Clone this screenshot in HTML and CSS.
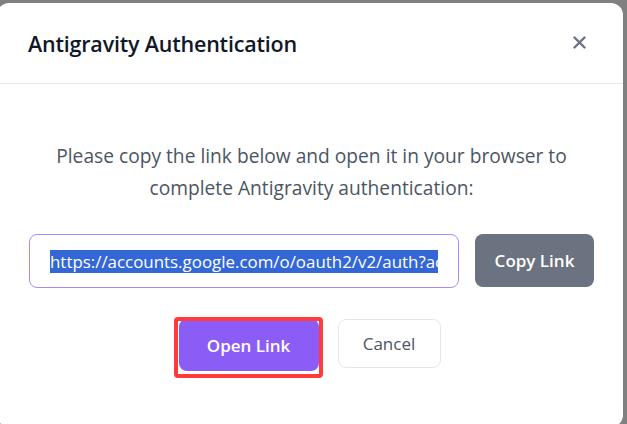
FILE: index.html
```html
<!DOCTYPE html>
<html lang="en">
<head>
<meta charset="utf-8">
<title>Antigravity Authentication</title>
<link rel="stylesheet" href="styles.css">
</head>
<body>
<div class="modal">
  <div class="modal-header">
    <h2 class="modal-title">Antigravity Authentication</h2>
    <button class="close-btn" aria-label="Close">
      <svg width="13" height="13" viewBox="0 0 13 13"><path d="M1.5 1.5 L11.5 11.5 M11.5 1.5 L1.5 11.5" stroke="#6b7280" stroke-width="2.4" stroke-linecap="round" fill="none"/></svg>
    </button>
  </div>
  <div class="modal-body">
    <p class="message">Please copy the link below and open it in your browser to<br>complete Antigravity authentication:</p>
    <div class="link-row">
      <div class="link-field"><div class="link-clip"><span class="link-text">https://accounts.google.com/o/oauth2/v2/auth?access_type=offline&amp;client_id=1071006060591</span></div></div>
      <button class="btn btn-gray">Copy Link</button>
    </div>
    <div class="actions">
      <div class="highlight-wrap">
        <button class="btn btn-primary">Open Link</button>
        <span class="annotation"></span>
      </div>
      <button class="btn btn-outline">Cancel</button>
    </div>
  </div>
</div>
</body>
</html>
```

FILE: styles.css
```css
html, body {
  margin: 0;
  padding: 0;
  height: 100%;
  overflow: hidden;
}
body {
  background: #808080;
  font-family: "Open Sans", "Noto Sans", sans-serif;
}
.modal {
  margin: 3px 0 0 -3px;
  width: 626px;
  height: 424px;
  background: #ffffff;
  border-radius: 12px;
  box-sizing: border-box;
}
.modal-header {
  height: 81px;
  box-sizing: border-box;
  padding: 0 37px 0 31px;
  display: flex;
  align-items: center;
  justify-content: space-between;
  border-bottom: 1px solid #e5e7eb;
}
.modal-title {
  margin: 0;
  font-size: 21.5px;
  font-weight: 600;
  color: #111827;
  letter-spacing: -0.2px;
}
.close-btn {
  border: 0;
  background: none;
  padding: 0;
  width: 13px;
  height: 13px;
  display: flex;
  margin-top: -2px;
}
.modal-body {
  padding: 56px 29px 0 32px;
}
.message {
  margin: 0;
  text-align: center;
  font-size: 19.2px;
  line-height: 32px;
  color: #4b5563;
}
.link-row {
  display: flex;
  gap: 16px;
  margin-top: 30px;
}
.link-field {
  flex: 1;
  min-width: 0;
  height: 54px;
  box-sizing: border-box;
  border: 1px solid #a78bfa;
  border-radius: 8px;
  padding: 0 20px;
  display: flex;
  align-items: center;
}
.link-clip {
  width: 100%;
  overflow: hidden;
  white-space: nowrap;
}
.link-text {
  background: #3367d6;
  color: #ffffff;
  font-size: 16.9px;
  line-height: 23px;
  display: inline-block;
}
.btn {
  font-family: "Open Sans", "Noto Sans", sans-serif;
  font-size: 17px;
  font-weight: 600;
  border-radius: 8px;
  cursor: pointer;
  box-sizing: border-box;
  flex-shrink: 0;
}
.btn-gray {
  width: 119px;
  height: 53px;
  border: 0;
  background: #6b7280;
  color: #ffffff;
}
.actions {
  display: flex;
  justify-content: center;
  align-items: flex-start;
  gap: 19px;
  margin-top: 31px;
  padding-right: 4px;
}
.highlight-wrap {
  position: relative;
  display: flex;
}
.btn-primary {
  width: 140px;
  height: 52px;
  border: 0;
  background: #8b5cf6;
  color: #ffffff;
}
.btn-outline {
  width: 103px;
  height: 49px;
  background: #ffffff;
  border: 1px solid #e5e7eb;
  color: #4b5563;
  font-weight: 500;
}
.annotation {
  position: absolute;
  left: -5px;
  top: -2px;
  right: -4px;
  bottom: -7px;
  border: 4px solid #ff3b3b;
  border-radius: 4px;
  pointer-events: none;
}
```
